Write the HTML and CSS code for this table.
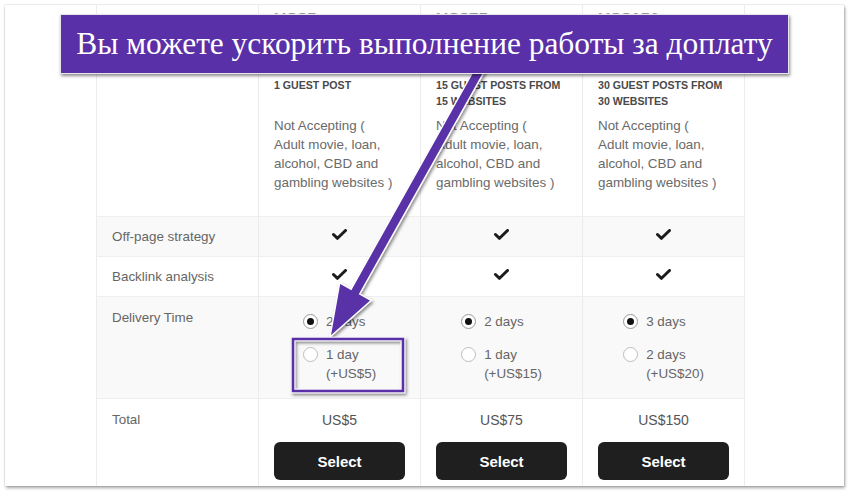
FILE: index.html
```html
<!DOCTYPE html>
<html lang="ru">
<head>
<meta charset="utf-8">
<title>Pricing</title>
<link rel="stylesheet" href="styles.css">
</head>
<body>
<div class="frame">
  <div class="table">
    <div class="row head">
      <div class="cell label"></div>
      <div class="cell pkg">
        <div class="price-clip"><div class="price-big">US$5</div></div>
        <div class="title">1 GUEST POST</div>
        <div class="desc">Not Accepting (<br>Adult movie, loan,<br>alcohol, CBD and<br>gambling websites )</div>
      </div>
      <div class="cell pkg">
        <div class="price-clip"><div class="price-big">US$75</div></div>
        <div class="title">15 GUEST POSTS FROM<br>15 WEBSITES</div>
        <div class="desc">Not Accepting (<br>Adult movie, loan,<br>alcohol, CBD and<br>gambling websites )</div>
      </div>
      <div class="cell pkg">
        <div class="price-clip"><div class="price-big">US$150</div></div>
        <div class="title">30 GUEST POSTS FROM<br>30 WEBSITES</div>
        <div class="desc">Not Accepting (<br>Adult movie, loan,<br>alcohol, CBD and<br>gambling websites )</div>
      </div>
    </div>

    <div class="row alt feat">
      <div class="cell label">Off-page strategy</div>
      <div class="cell center"><svg class="check" viewBox="0 0 15 11" width="15" height="11"><path d="M1.5 5.5 L5.5 9.3 L13.5 1.5" fill="none" stroke="#1c1c1c" stroke-width="3" stroke-linecap="round" stroke-linejoin="round"/></svg></div>
      <div class="cell center"><svg class="check" viewBox="0 0 15 11" width="15" height="11"><path d="M1.5 5.5 L5.5 9.3 L13.5 1.5" fill="none" stroke="#1c1c1c" stroke-width="3" stroke-linecap="round" stroke-linejoin="round"/></svg></div>
      <div class="cell center"><svg class="check" viewBox="0 0 15 11" width="15" height="11"><path d="M1.5 5.5 L5.5 9.3 L13.5 1.5" fill="none" stroke="#1c1c1c" stroke-width="3" stroke-linecap="round" stroke-linejoin="round"/></svg></div>
    </div>

    <div class="row feat">
      <div class="cell label">Backlink analysis</div>
      <div class="cell center"><svg class="check" viewBox="0 0 15 11" width="15" height="11"><path d="M1.5 5.5 L5.5 9.3 L13.5 1.5" fill="none" stroke="#1c1c1c" stroke-width="3" stroke-linecap="round" stroke-linejoin="round"/></svg></div>
      <div class="cell center"><svg class="check" viewBox="0 0 15 11" width="15" height="11"><path d="M1.5 5.5 L5.5 9.3 L13.5 1.5" fill="none" stroke="#1c1c1c" stroke-width="3" stroke-linecap="round" stroke-linejoin="round"/></svg></div>
      <div class="cell center"><svg class="check" viewBox="0 0 15 11" width="15" height="11"><path d="M1.5 5.5 L5.5 9.3 L13.5 1.5" fill="none" stroke="#1c1c1c" stroke-width="3" stroke-linecap="round" stroke-linejoin="round"/></svg></div>
    </div>

    <div class="row alt delivery">
      <div class="cell label">Delivery Time</div>
      <div class="cell opts">
        <div class="group">
          <div class="opt"><span class="radio on"></span><span>2 days</span></div>
          <div class="opt"><span class="radio"></span><span>1 day<br>(+US$5)</span></div>
        </div>
      </div>
      <div class="cell opts">
        <div class="group">
          <div class="opt"><span class="radio on"></span><span>2 days</span></div>
          <div class="opt"><span class="radio"></span><span>1 day<br>(+US$15)</span></div>
        </div>
      </div>
      <div class="cell opts">
        <div class="group">
          <div class="opt"><span class="radio on"></span><span>3 days</span></div>
          <div class="opt"><span class="radio"></span><span>2 days<br>(+US$20)</span></div>
        </div>
      </div>
    </div>

    <div class="row total">
      <div class="cell label">Total</div>
      <div class="cell buy"><div class="sum">US$5</div><button class="btn">Select</button></div>
      <div class="cell buy"><div class="sum">US$75</div><button class="btn">Select</button></div>
      <div class="cell buy"><div class="sum">US$150</div><button class="btn">Select</button></div>
    </div>
  </div>
</div>

<svg class="overlay" width="850" height="491" viewBox="0 0 850 491">
  <defs>
    <filter id="sh" x="-20%" y="-20%" width="140%" height="140%">
      <feDropShadow dx="1.5" dy="2" stdDeviation="1.5" flood-color="#000" flood-opacity="0.45"/>
    </filter>
  </defs>
  <polygon filter="url(#sh)" points="492.3,57.4 359.7,294 371.1,300.4 330,337 339.7,282.8 351.1,289.2 483.7,52.6" fill="#5a30a8" stroke="#ffffff" stroke-width="1.4" stroke-linejoin="miter"/>
  <rect filter="url(#sh)" x="293" y="339" width="110" height="52" fill="none" stroke="#ffffff" stroke-width="4.5"/>
  <rect x="293" y="339" width="110" height="52" fill="none" stroke="#5a30a8" stroke-width="2.6"/>
</svg>

<div class="banner">Вы можете ускорить выполнение работы за доплату</div>
</body>
</html>
```

FILE: styles.css
```css
* { box-sizing: border-box; }

html, body {
  margin: 0;
  padding: 0;
  background: #ffffff;
  width: 850px;
  height: 491px;
  overflow: hidden;
}

body {
  font-family: "Liberation Sans", Arial, sans-serif;
  color: #666666;
  padding: 5px 6px 5px 5px;
}

.frame {
  width: 839px;
  height: 481px;
  background: #ffffff;
  overflow: hidden;
  box-shadow: 0 0 1px rgba(0,0,0,0.35), 1px 2px 3px rgba(0,0,0,0.35);
  padding-left: 91px;
}

.table {
  width: 649px;
  border-right: 1px solid #ececec;
}

.row {
  display: grid;
  grid-template-columns: 162px 162px 162px 162px;
  border-top: 1px solid #efefef;
}

.row.head { border-top: 0; }

.row.alt { background: #f9f9f9; }

.cell {
  border-left: 1px solid #ececec;
  padding: 0 15px;
  font-size: 13.4px;
  line-height: 19px;
}

.pkg {
  padding-top: 5px;
  padding-bottom: 24px;
}

.price-clip {
  height: 9px;
  overflow: hidden;
}

.price-big {
  font-size: 17px;
  line-height: 22px;
  margin-top: -1px;
  font-weight: bold;
  color: #9a9a9a;
}

.title {
  margin-top: 58px;
  min-height: 32px;
  font-size: 10.6px;
  line-height: 16px;
  font-weight: bold;
  color: #4a4a4a;
}

.desc {
  margin-top: 7px;
  color: #6a6a6a;
}

.feat .cell {
  padding-top: 10px;
  padding-bottom: 10px;
}

.center {
  display: flex;
  align-items: center;
  justify-content: center;
}

.check { display: block; margin-top: -5px; }

.label { color: #666666; }

.delivery .label { padding-top: 11px; }

.opts {
  display: flex;
  justify-content: center;
  padding-top: 15px;
  padding-bottom: 15px;
}

.group {
  display: flex;
  flex-direction: column;
  gap: 14px;
}

.opt {
  display: flex;
  align-items: flex-start;
  gap: 8px;
  color: #666;
}

.radio {
  width: 15px;
  height: 15px;
  border-radius: 50%;
  border: 1px solid #bdbdbd;
  background: #fff;
  margin-top: 2px;
  display: flex;
  align-items: center;
  justify-content: center;
  flex: none;
}

.radio.on {
  border-color: #9a9a9a;
}

.radio.on::after {
  content: "";
  width: 7px;
  height: 7px;
  border-radius: 50%;
  background: #111;
}

.total .label { padding-top: 11px; }

.buy {
  padding-top: 12px;
  padding-bottom: 10px;
  display: flex;
  flex-direction: column;
  align-items: center;
}

.sum {
  font-size: 14px;
  line-height: 19px;
  color: #555;
}

.btn {
  margin-top: 12px;
  width: 131px;
  height: 38px;
  border: 0;
  border-radius: 6px;
  background: #1f1f20;
  color: #ffffff;
  font-family: "Liberation Sans", Arial, sans-serif;
  font-size: 15px;
  font-weight: bold;
}

.overlay {
  position: absolute;
  left: 0;
  top: 0;
  pointer-events: none;
}

.banner {
  position: absolute;
  left: 60px;
  top: 14px;
  width: 729px;
  height: 60px;
  background: #5a30a8;
  border: 1px solid #e6e6e6;
  box-shadow: 1px 2px 3px rgba(0,0,0,0.45);
  color: #ffffff;
  font-family: "Liberation Serif", "Times New Roman", serif;
  font-size: 31.4px;
  line-height: 58px;
  text-align: center;
  white-space: nowrap;
}
```
